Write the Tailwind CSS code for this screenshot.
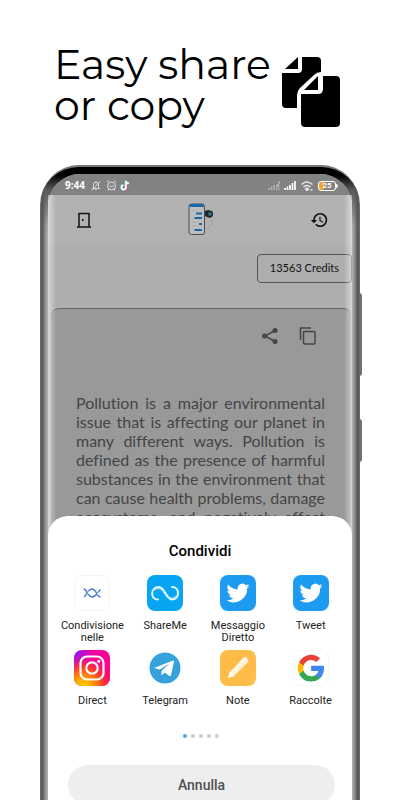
<!DOCTYPE html>
<html lang="it">
<head>
    <meta charset="UTF-8">
    <meta name="viewport" content="width=device-width, initial-scale=1.0">
    <title>Easy share or copy</title>
    <script src="https://cdn.jsdelivr.net/npm/@tailwindcss/browser@4"></script>
</head>
<body class="bg-white">
<main class="h-screen overflow-hidden font-[Roboto,sans-serif]">

    <!-- Headline -->
    <header class="flex h-[165px] items-start pl-[54px] pt-11">
        <h1 class="w-[228px] font-[Montserrat,Inter,sans-serif] text-[41px] leading-[41px] whitespace-nowrap text-black">Easy share<br>or copy</h1>
        <svg class="mt-3 h-[72px] w-[58px]" viewBox="0 0 58 72" aria-hidden="true">
            <path d="M3 13 16 1V13Z"/>
            <path d="M20 1h15q4 0 4 4v11q-4 0-7 3L18 32q-3 3-3 7v13H4q-4 0-4-4V17h16q4 0 4-4Z"/>
            <path d="M22 34 36 20v14Z"/>
            <path d="M41 20h13q4 0 4 4v43q0 4-4 4H23q-4 0-4-4V38h17q5 0 5-5Z"/>
        </svg>
    </header>

    <!-- Phone -->
    <div class="relative mx-10">
        <div class="absolute top-[128px] -right-[2px] h-[83px] w-[3px] rounded-r-sm bg-[#707070]"></div>
        <div class="absolute top-[254px] -right-[2px] h-[43px] w-[3px] rounded-r-sm bg-[#707070]"></div>

        <div class="relative rounded-t-[40px] bg-[linear-gradient(to_right,#777_0,#505050_2px,#777_4px,#aaa_7px,#aaa_calc(100%-7px),#888_calc(100%-5px),#505050_calc(100%-2px),#777_100%)] px-2">
            <!-- top bezel -->
            <div class="absolute inset-x-[1px] top-0 h-[64px] rounded-t-[38px] border-t-2 border-[#777] bg-[linear-gradient(to_bottom,#000_8px,#555_22px,transparent_60px)]"></div>

            <div class="relative top-[9px] overflow-hidden rounded-t-[32px] bg-[#aeaeae]">

                <div class="h-[362px] overflow-hidden">
                    <!-- Status bar -->
                    <div class="flex h-[21px] items-center bg-[#828282] pr-[14px] pl-[17px] pt-[2px] text-white">
                        <span class="w-[26px] font-['Open_Sans',sans-serif] text-[10px] font-bold">9:44</span>
                        <svg class="h-[10px] w-[10px]" viewBox="0 0 12 12" fill="none" stroke="#eee">
                            <path d="M2 9h8L9 7V4.500a3 3 0 0 0-6 0V7ZM5 10.500h2M6 0v1.500M1 11.500 11 .5"/>
                        </svg>
                        <svg class="ml-[5px] h-[11px] w-[11px]" viewBox="0 0 12 12" fill="none" stroke="#eee">
                            <circle cx="6" cy="6.500" r="4.300"/>
                            <path d="m4 6 2 1.500L8.500 6M1 2.500 3 .5M11 2.500 9 .5M3 10l-1 1.500M9 10l1 1.500"/>
                        </svg>
                        <svg class="ml-[3px] h-[11px] w-[10px]" viewBox="0 0 10 11" fill="none" stroke-width="2">
                            <path d="M6.500 1v6.500a2.200 2.200 0 1 1-2.500-2M6.500 1.500q.5 2 3 2" stroke="#ed4a68"/>
                            <path d="M5.500.5V7A2.200 2.200 0 1 1 3 5M5.500 1q.5 2 3 2" stroke="#60dfe0"/>
                            <path d="M6 1v6.300a2.200 2.200 0 1 1-2.500-2M6 1.500q.5 2 3 2" stroke="#fff" stroke-width="1.500"/>
                        </svg>
                        <svg class="ml-auto h-[9px] w-3" viewBox="0 0 12 9" stroke="#b5b5b5" stroke-width="1.500" fill="none">
                            <path d="M1 9V7M3.500 9V5.500M6 9V4M8.500 9V7.500M11 9V7.500M8.500 3.500l2.500 3M11 3.500l-2.500 3M11 0v3"/>
                        </svg>
                        <svg class="ml-1 h-[9px] w-3" viewBox="0 0 12 9" stroke="#fff" stroke-width="1.700">
                            <path d="M1 9V7M3.500 9V5.500M6 9V4M8.500 9V2M11 9V0"/>
                        </svg>
                        <svg class="ml-[5px] h-[10px] w-3" viewBox="0 0 12 10" fill="none" stroke="#e8e8e8" stroke-width="1.500">
                            <path d="M.5 3.500q5-5 11 0M2.500 6q3.500-3 7 0M4.500 8q1.500-1.500 3 0L6 9.500Z"/>
                            <path d="M9.500 9h2"/>
                        </svg>
                        <div class="ml-[5px] flex h-[10px] w-[18px] items-center justify-center rounded-[3px] border border-white bg-[linear-gradient(to_right,#efa22e_5px,transparent_5px)] text-[8px] leading-none font-bold">25</div>
                        <div class="h-1 w-[2px] rounded-r bg-white"></div>
                    </div>

                    <!-- App bar -->
                    <nav class="flex h-[49px] items-center justify-between bg-[#b2b2b2] pr-6 pl-7 text-[#111]">
                        <button type="button" aria-label="Esci">
                            <svg class="h-4 w-4" viewBox="0 0 16 16" fill="none" stroke="currentColor" stroke-width="1.500">
                                <path d="M1 15h14M3 15V1.500h10V15"/><path d="M6 8h1.500" stroke-width="2"/>
                            </svg>
                        </button>
                        <svg class="h-[33px] w-[26px]" viewBox="0 0 26 33" aria-hidden="true">
                            <rect x="1" y="1" width="15.500" height="30.500" rx="2.500" fill="#bdbdbd" stroke="#4a5058"/>
                            <path d="M1.500 4V3q0-2 2-2h10.500q2 0 2 2v1Z" fill="#1769ae"/>
                            <path d="M8 10.500h6M6.500 15H14M11 21h3M6.500 27H14" stroke="#1769ae" stroke-width="2"/>
                            <path d="M3 8h4M3 19h5M3 23h5" stroke="#aaa"/>
                            <path d="m17 8 3-1 4 1q2 2 1 5l-3 2-3-1-2-1Z" fill="#192a32"/>
                            <circle cx="22" cy="11" r="2" fill="#346c72"/>
                            <path d="M24 16q1 7-5 10" stroke="#a0a0a0" fill="none"/>
                        </svg>
                        <button type="button" aria-label="Cronologia">
                            <svg class="h-[18px] w-[18px]" viewBox="0 1 23 22" fill="currentColor">
                                <path d="M13 3a9 9 0 0 0-9 9H1l4 4 4-4H6a7 7 0 1 1 2.060 4.940l-1.420 1.420A9 9 0 1 0 13 3Zm-1 5v5l4.300 2.500.7-1.200-3.500-2.100V8Z"/>
                            </svg>
                        </button>
                    </nav>

                    <!-- Credits -->
                    <div class="flex h-[64px] items-start justify-end pt-[10px]">
                        <button type="button" class="h-[29px] rounded-[4px] border border-[#555] px-3 font-[Lato,sans-serif] text-[11px] text-[#111]">13563 Credits</button>
                    </div>

                    <!-- Answer -->
                    <section class="mr-[1px] ml-[3px] h-[240px] rounded-t-[8px] border-t border-[#666] bg-[#999] pr-[26px] pl-[25px] pt-[18px] text-[#454545]">
                        <div class="flex justify-end gap-5 pr-2">
                            <button type="button" aria-label="Condividi">
                                <svg class="h-[18px] w-[18px]" viewBox="0 0 18 18" fill="currentColor">
                                    <path d="M14 3.500 4 9l10 5.500" fill="none" stroke="currentColor" stroke-width="1.500"/>
                                    <circle cx="14" cy="3.500" r="2.500"/><circle cx="3.500" cy="9" r="2.500"/><circle cx="14" cy="14.500" r="2.500"/>
                                </svg>
                            </button>
                            <button type="button" aria-label="Copia">
                                <svg class="h-[18px] w-[18px]" viewBox="0 0 18 18" fill="none" stroke="currentColor" stroke-width="1.500">
                                    <path d="M1.500 13V1H12"/><rect x="4.500" y="4.500" width="11.500" height="12.500" rx="1"/>
                                </svg>
                            </button>
                        </div>
                        <p class="mt-12 text-justify font-[Lato,sans-serif] text-[16px] leading-[19px] [font-variant-ligatures:none] [text-align-last:justify]">Pollution is a major environmental issue that is affecting our planet in many different ways. Pollution is defined as the presence of harmful substances in the environment that can cause health problems, damage ecosystems, and negatively affect</p>
                    </section>
                </div>

                <!-- Share sheet -->
                <section class="relative -mt-5 rounded-t-[20px] bg-white pt-[25px] pb-8 text-center text-[#222]">
                    <h2 class="text-[15px] leading-5 font-medium text-black">Condividi</h2>
                    <div class="mt-[14px] grid grid-cols-4 pr-[5px] pl-2 text-[11px] leading-3">
                        <button type="button" class="flex h-[75px] flex-col items-center gap-[9px]">
                            <svg class="h-9 w-9 shrink-0" viewBox="0 0 36 36" fill="none">
                                <rect x=".5" y=".5" width="35" height="35" rx="8" fill="#fff" stroke="#f5f5f5"/>
                                <path d="M9.500 14c4 0 4 8 8.500 8 4 0 5-4 8.500-7.500M10 22c3-2 4-8 8-8 4.500 0 4.500 8 8.500 8" stroke="#4a7bd8" stroke-width="1.500" stroke-dasharray="6 1 12 1"/>
                            </svg>
                            <span>Condivisione<br>nelle</span>
                        </button>
                        <button type="button" class="flex h-[75px] flex-col items-center gap-[9px]">
                            <svg class="h-9 w-9 shrink-0" viewBox="0 0 36 36" fill="none">
                                <rect width="36" height="36" rx="8" fill="#08a5f2"/>
                                <path d="M7 15c3-3 7-2 9 1l4 5c3 3 7 3 10 0" stroke="#7bd0fa" stroke-width="2"/>
                                <path d="M11 24.500C3 24.500 3 12 12 12c6 0 7 12.500 13 12.500 8 0 8-12.500 0-12.500" stroke="#e3f7ff" stroke-width="2" stroke-linecap="round"/>
                            </svg>
                            <span>ShareMe</span>
                        </button>
                        <button type="button" class="flex h-[75px] flex-col items-center gap-[9px]">
                            <svg class="h-9 w-9 shrink-0" viewBox="0 0 36 36">
                                <rect width="36" height="36" rx="8" fill="#1d9bf0"/>
                                <path transform="translate(6.500 6.500) scale(.96)" fill="#fff" d="M23.950 4.570a10 10 0 0 1-2.820.77 4.960 4.960 0 0 0 2.160-2.720c-.95.550-2 .95-3.120 1.180a4.920 4.920 0 0 0-8.380 4.480C7.690 8.090 4.070 6.130 1.640 3.160a4.920 4.920 0 0 0 1.520 6.570 4.900 4.900 0 0 1-2.230-.61v.06a4.920 4.920 0 0 0 3.950 4.830 5 5 0 0 1-2.210.08 4.940 4.940 0 0 0 4.600 3.420A9.870 9.870 0 0 1 0 19.540a14 14 0 0 0 21.500-12.400c.95-.68 1.800-1.560 2.450-2.570Z"/>
                            </svg>
                            <span>Messaggio<br>Diretto</span>
                        </button>
                        <button type="button" class="flex h-[75px] flex-col items-center gap-[9px]">
                            <svg class="h-9 w-9 shrink-0" viewBox="0 0 36 36">
                                <rect width="36" height="36" rx="8" fill="#1d9bf0"/>
                                <path transform="translate(6.500 6.500) scale(.96)" fill="#fff" d="M23.950 4.570a10 10 0 0 1-2.820.77 4.960 4.960 0 0 0 2.160-2.720c-.95.550-2 .95-3.120 1.180a4.920 4.920 0 0 0-8.380 4.480C7.690 8.090 4.070 6.130 1.640 3.160a4.920 4.920 0 0 0 1.520 6.570 4.900 4.900 0 0 1-2.230-.61v.06a4.920 4.920 0 0 0 3.950 4.830 5 5 0 0 1-2.210.08 4.940 4.940 0 0 0 4.600 3.420A9.870 9.870 0 0 1 0 19.540a14 14 0 0 0 21.500-12.400c.95-.68 1.800-1.560 2.450-2.570Z"/>
                            </svg>
                            <span>Tweet</span>
                        </button>
                        <button type="button" class="flex h-[75px] flex-col items-center gap-[9px]">
                            <svg class="h-9 w-9 shrink-0" viewBox="0 0 36 36" fill="none">
                                <defs>
                                    <linearGradient id="ig" x1="0" y1="0" x2="1" y2="0"><stop stop-color="#8a19f5"/><stop offset=".55" stop-color="#f500a5"/><stop offset="1" stop-color="#ff0090"/></linearGradient>
                                    <radialGradient id="sun" cx=".25" cy="1.050" r=".95"><stop stop-color="#ffd600"/><stop offset=".25" stop-color="#ffab00"/><stop offset=".6" stop-color="#ff3d28"/><stop offset="1" stop-color="#ff007a" stop-opacity="0"/></radialGradient>
                                </defs>
                                <rect width="36" height="36" rx="8" fill="url(#ig)"/>
                                <rect width="36" height="36" rx="8" fill="url(#sun)"/>
                                <rect x="6.500" y="6.500" width="23" height="23" rx="6.500" stroke="#fff" stroke-width="2.200"/>
                                <circle cx="18" cy="18" r="5.700" stroke="#fff" stroke-width="2.200"/>
                                <circle cx="24.700" cy="11.300" r="1.500" fill="#fff"/>
                            </svg>
                            <span>Direct</span>
                        </button>
                        <button type="button" class="flex h-[75px] flex-col items-center gap-[9px]">
                            <svg class="h-9 w-9 shrink-0" viewBox="0 0 36 36">
                                <rect x=".5" y=".5" width="35" height="35" rx="8" fill="#fff" stroke="#fafafa"/>
                                <circle cx="18" cy="18" r="15.500" fill="#35a2dc"/>
                                <path d="M7.500 17.800 26 10.600q1.300-.3 1 1.200l-3 13.400q-.5 1.500-2 .5l-4.300-3.200-2.400 2.300-1 .2.500-4.500 8-7.300-10 6.300-4.800-1.300q-1.500-.2-.5-.4Z" fill="#fff"/>
                            </svg>
                            <span>Telegram</span>
                        </button>
                        <button type="button" class="flex h-[75px] flex-col items-center gap-[9px]">
                            <svg class="h-9 w-9 shrink-0" viewBox="0 0 36 36" fill="none">
                                <rect width="36" height="36" rx="8" fill="#ffbc48"/>
                                <path d="M5 9h26M5 17h26M5 25h26" stroke="#f6b444" stroke-dasharray="3 1"/>
                                <path d="m8 28 2-6L23 8q2-2 4 0t1 4L14 26Z" fill="#fff4df"/>
                                <path d="m8 28 2-6 4 4Z" fill="#fff"/>
                                <path d="m13 25 14-14" stroke="#ffe5b8"/>
                            </svg>
                            <span>Note</span>
                        </button>
                        <button type="button" class="flex h-[75px] flex-col items-center gap-[9px]">
                            <svg class="h-9 w-9 shrink-0" viewBox="0 0 36 36" fill="none">
                                <rect x=".5" y=".5" width="35" height="35" rx="8" fill="#fff" stroke="#f7f7f7"/>
                                <g transform="translate(3.500 3.500) scale(1.220)">
                                    <path fill="#4285f4" d="M22.560 12.250c0-.78-.07-1.530-.2-2.250H12v4.260h5.920a5.060 5.060 0 0 1-2.200 3.320v2.770h3.570c2.080-1.920 3.270-4.740 3.270-8.100Z"/>
                                    <path fill="#34a853" d="M12 23c2.970 0 5.460-.98 7.280-2.660l-3.570-2.770a6.600 6.600 0 0 1-9.870-3.470H2.180v2.840A11 11 0 0 0 12 23Z"/>
                                    <path fill="#fbbc05" d="M5.840 14.090a6.600 6.600 0 0 1 0-4.180V7.070H2.180a11 11 0 0 0 0 9.860l3.660-2.840Z"/>
                                    <path fill="#ea4335" d="M12 5.380c1.620 0 3.060.56 4.210 1.640l3.150-3.150A11 11 0 0 0 2.180 7.070l3.660 2.840C6.710 7.310 9.140 5.380 12 5.380Z"/>
                                </g>
                            </svg>
                            <span>Raccolte</span>
                        </button>
                    </div>
                    <div class="mt-[9px] flex justify-center gap-1 pl-[2px]">
                        <span class="h-1 w-1 rounded-full bg-[#38a8e8]"></span>
                        <span class="h-1 w-1 rounded-full bg-[#ccc]"></span>
                        <span class="h-1 w-1 rounded-full bg-[#ccc]"></span>
                        <span class="h-1 w-1 rounded-full bg-[#ccc]"></span>
                        <span class="h-1 w-1 rounded-full bg-[#ccc]"></span>
                    </div>
                    <div class="mt-[27px] pr-[17px] pl-5">
                        <button type="button" class="h-10 w-full rounded-full bg-[#eee] text-[14px] font-medium text-[#505050]">Annulla</button>
                    </div>
                </section>
            </div>

            <!-- light along the curved glass -->
            <div class="pointer-events-none absolute top-[30px] left-2 h-[342px] w-2 bg-linear-to-r from-white/50 to-transparent"></div>
            <div class="pointer-events-none absolute top-[30px] right-2 h-[342px] w-2 bg-linear-to-l from-white/50 to-transparent"></div>
        </div>
    </div>
</main>
</body>
</html>
